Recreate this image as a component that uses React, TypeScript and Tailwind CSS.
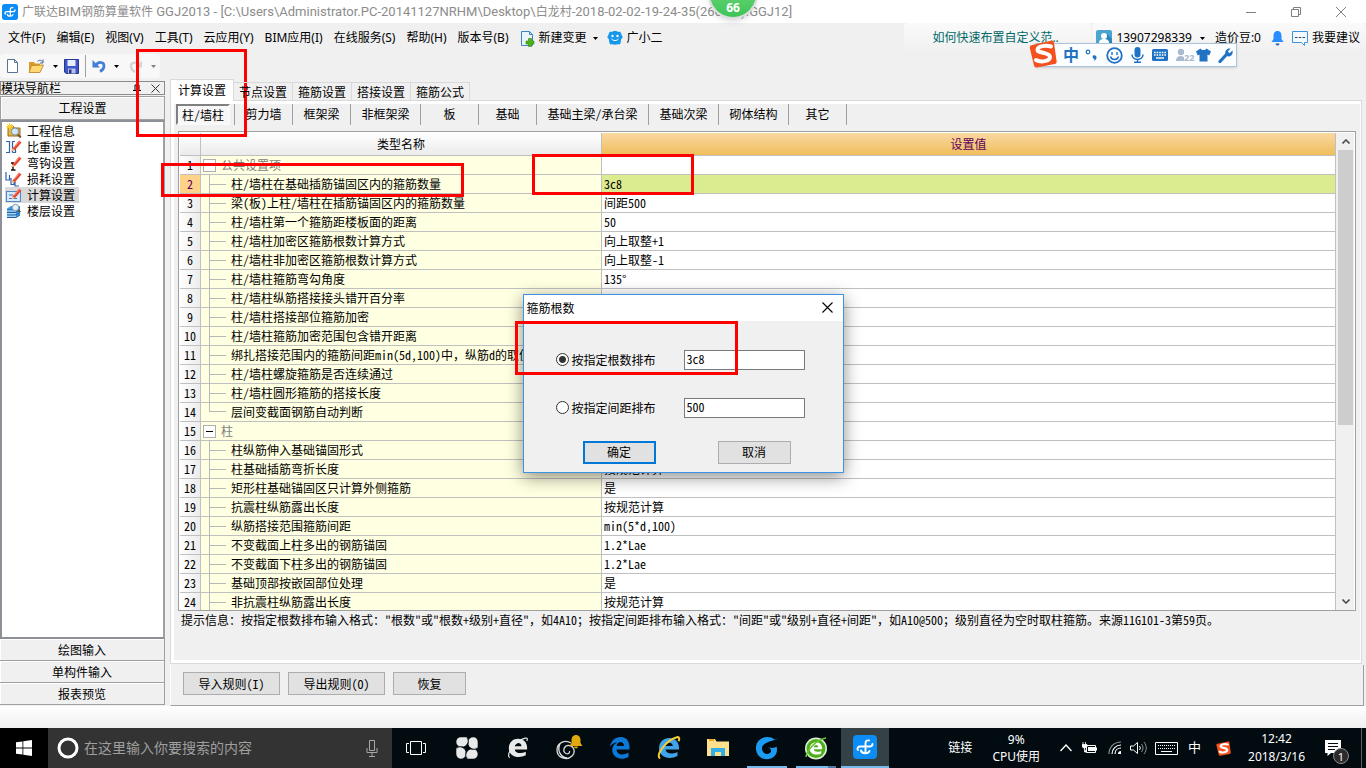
import type { ReactNode } from 'react';

type Row = { label: string; value?: string; group?: boolean; last?: boolean };

const rows: Row[] = [
  { label: '公共设置项', group: true },
  { label: '柱/墙柱在基础插筋锚固区内的箍筋数量', value: '3c8' },
  { label: '梁(板)上柱/墙柱在插筋锚固区内的箍筋数量', value: '间距500' },
  { label: '柱/墙柱第一个箍筋距楼板面的距离', value: '50' },
  { label: '柱/墙柱加密区箍筋根数计算方式', value: '向上取整+1' },
  { label: '柱/墙柱非加密区箍筋根数计算方式', value: '向上取整-1' },
  { label: '柱/墙柱箍筋弯勾角度', value: '135°' },
  { label: '柱/墙柱纵筋搭接接头错开百分率' },
  { label: '柱/墙柱搭接部位箍筋加密' },
  { label: '柱/墙柱箍筋加密范围包含错开距离' },
  { label: '绑扎搭接范围内的箍筋间距min(5d,100)中，纵筋d的取值' },
  { label: '柱/墙柱螺旋箍筋是否连续通过' },
  { label: '柱/墙柱圆形箍筋的搭接长度' },
  { label: '层间变截面钢筋自动判断', last: true },
  { label: '柱', group: true },
  { label: '柱纵筋伸入基础锚固形式' },
  { label: '柱基础插筋弯折长度', value: '按规范计算' },
  { label: '矩形柱基础锚固区只计算外侧箍筋', value: '是' },
  { label: '抗震柱纵筋露出长度', value: '按规范计算' },
  { label: '纵筋搭接范围箍筋间距', value: 'min(5*d,100)' },
  { label: '不变截面上柱多出的钢筋锚固', value: '1.2*Lae' },
  { label: '不变截面下柱多出的钢筋锚固', value: '1.2*Lae' },
  { label: '基础顶部按嵌固部位处理', value: '是' },
  { label: '非抗震柱纵筋露出长度', value: '按规范计算' },
];

const hint =
  '提示信息：按指定根数排布输入格式："根数"或"根数+级别+直径"，如4A10；按指定间距排布输入格式："间距"或"级别+直径+间距"，如A10@500；级别直径为空时取柱箍筋。来源11G101-3第59页。';

const menus = ['文件(F)', '编辑(E)', '视图(V)', '工具(T)', '云应用(Y)', 'BIM应用(I)', '在线服务(S)', '帮助(H)', '版本号(B)'];

const subTabs: [string, string][] = [
  ['剪力墙', 'w-[58px]'],
  ['框架梁', 'w-[58px]'],
  ['非框架梁', 'w-[70px]'],
  ['板', 'w-[58px]'],
  ['基础', 'w-[58px]'],
  ['基础主梁/承台梁', 'w-[112px]'],
  ['基础次梁', 'w-[70px]'],
  ['砌体结构', 'w-[70px]'],
  ['其它', 'w-[58px]'],
];

/** Half-width Latin text in which the Chinese comma stays full-width. */
function Mixed({ text }: { text: string }) {
  return (
    <>
      {text.split(/(，)/).map((part, i) =>
        part === '，' ? <span key={i} className="[font-feature-settings:normal]">，</span> : part,
      )}
    </>
  );
}

function Icon({ w = 16, h = 16, box, children }: { w?: number; h?: number; box?: string; children: ReactNode }) {
  return (
    <svg width={w} height={h} viewBox={box ?? `0 0 ${w} ${h}`} fill="none" className="shrink-0" aria-hidden="true">
      {children}
    </svg>
  );
}

function AppLogo({ size }: { size: number }) {
  return (
    <Icon w={size} h={size} box="0 0 24 24">
      <rect width="24" height="24" rx="4" fill="#0b8df5" />
      <path
        d="M5 15c-1.500-2 0-3.500 2.500-3.500h9c2 0 3-.5 3-2.500M16 5.500c-2.500-.5-3.500.5-3.500 3v9.500M8 15.500c.5 3.500 7.500 3.500 8.500.500"
        stroke="#fff"
        strokeWidth="1.900"
        strokeLinecap="round"
      />
    </Icon>
  );
}

function Caret({ color = '#000' }: { color?: string }) {
  return (
    <Icon w={5} h={3}>
      <path d="M0 0h5L2.500 3z" fill={color} />
    </Icon>
  );
}

function Pencil() {
  return (
    <>
      <path d="M6.500 9.500 13 1.500l2.500 2L9 11l-3.500 1.200z" fill="#e8462e" />
      <path d="m8 8.500 5.500-6.500" stroke="#ff9a80" />
      <path d="m5.500 12.200.9-2.700L9 11z" fill="#f3cf9a" />
    </>
  );
}

const navItems: { label: string; icon: ReactNode }[] = [
  {
    label: '工程信息',
    icon: (
      <>
        <path d="M2 3h5l1 2h6v8H2z" fill="#e6b443" stroke="#9a6a12" />
        <circle cx="9" cy="8.500" r="3.600" fill="#cfe8fb" stroke="#7d8fa3" />
        <path d="m11.800 11.500 3 3" stroke="#7a5a30" strokeWidth="2" />
        <path d="M3.500 0v7M0 3.500h7M1 1l5 5M6 1 1 6" stroke="#ffd21f" />
      </>
    ),
  },
  {
    label: '比重设置',
    icon: (
      <>
        <path d="M0 2.500h3.500v11H0M6 2.500h3M6.500 2.500v11M6.500 13.500h3V10" stroke="#2f62a8" strokeWidth="1.200" />
        <Pencil />
      </>
    ),
  },
  {
    label: '弯钩设置',
    icon: (
      <>
        <path d="M5 8h4M7 8v7M5 15h4.500" stroke="#111" strokeWidth="1.400" />
        <Pencil />
      </>
    ),
  },
  {
    label: '损耗设置',
    icon: (
      <>
        <path d="M0 1v8h3.500V4M5 7v6.500h3V9M9 10v5h4" stroke="#2f62a8" strokeWidth="1.200" />
        <Pencil />
      </>
    ),
  },
  {
    label: '计算设置',
    icon: (
      <>
        <rect x="0.500" y="4.500" width="14" height="10" fill="#d7e9fb" stroke="#4f86c6" />
        <path d="M3 8h4M3 11.500h8" stroke="#3d79c0" />
        <Pencil />
      </>
    ),
  },
  {
    label: '楼层设置',
    icon: (
      <>
        <path d="M1 5.500 5 3h9v9l-4 2.500H1z" fill="#3f9be0" />
        <path d="M1 7h9l4-2.500M1 9.500h9L14 7M1 12h9l4-2.500M1 14.500h9l4-2.500" stroke="#1c5fa0" />
        <path d="M1 8h9M1 10.700h9M1 13.200h9" stroke="#c9e8ff" />
        <circle cx="9.500" cy="4.500" r="3.200" fill="#e3f2fc" stroke="#8c97a3" />
        <path d="m12 7 2.500 2" stroke="#6b4a26" strokeWidth="1.600" />
      </>
    ),
  },
];

function TitleBar() {
  return (
    <header className="flex h-[23px] shrink-0 items-center bg-white pl-0.5 text-[#8c8c8c]">
      <AppLogo size={16} />
      <h1 className="ml-1 whitespace-nowrap text-[13px] leading-5 [font-family:Roboto,'Noto_Sans_CJK_SC',sans-serif]">
        <span className="text-xs">广联达</span>BIM<span className="text-xs">钢筋算量软件</span>
        {' GGJ2013 - [C:\\Users\\Administrator.PC-20141127NRHM\\Desktop\\'}
        <span className="text-xs">白龙村</span>-2018-02-02-19-24-35(2666<span className="text-xs">版</span>).GGJ12]
      </h1>
      <div className="ml-auto flex items-center pr-[3px]">
        <button aria-label="最小化" className="flex w-[45px] justify-center">
          <Icon w={10} h={10}><path d="M0 5.500h10" stroke="#808080" /></Icon>
        </button>
        <button aria-label="还原" className="flex w-[45px] justify-center">
          <Icon w={10} h={10}><path d="M.5 2.500h7v7h-7zM2.500 2.500v-2h7v7h-2" stroke="#808080" /></Icon>
        </button>
        <button aria-label="关闭" className="flex w-[45px] justify-center">
          <Icon w={10} h={10}><path d="m0 0 10 10M10 0 0 10" stroke="#808080" /></Icon>
        </button>
      </div>
    </header>
  );
}

function MenuBar() {
  return (
    <div className="flex h-[30px] shrink-0 items-center whitespace-nowrap text-xs">
      <nav className="flex items-center gap-[11px] pl-2">
        {menus.map((m) => (
          <button key={m}>{m}</button>
        ))}
        <button className="flex items-center gap-1">
          <Icon w={15} h={17}>
            <path d="M1.500 1.500h8l3 3v11h-11z" fill="#e9f4fd" stroke="#3f82c3" />
            <path d="M9.500 1.500v3h3" stroke="#3f82c3" />
            <path d="M8.500 8.500h3v2.500H14v3h-2.500v2.500h-3V14H6v-3h2.500z" fill="#4cb418" stroke="#2f8a0a" strokeWidth=".6" />
          </Icon>
          新建变更
          <span className="ml-0.5"><Caret /></span>
        </button>
        <button className="-ml-0.5 flex items-center gap-1">
          <Icon w={16} h={16}>
            <path d="M8 1c1.500 0 2.500.6 3.500 1 1.500-.5 2.500.3 2.500 1.500l1.500 3.200c.3 1-.4 1.800-1.200 2l-.8 4.300c-.2 1.600-1.500 1.500-2.500 1.200-2 .6-4 .6-6 0-1 .3-2.300.4-2.500-1.200l-.8-4.300C.9 8.500.2 7.700.5 6.700L2 3.500C2 2.300 3 1.500 4.500 2 5.500 1.600 6.500 1 8 1z" fill="#1597ea" />
            <circle cx="5.500" cy="6" r="1.200" fill="#fff" />
            <circle cx="10.500" cy="6" r="1.200" fill="#fff" />
            <path d="M4.500 9c1.800 2 5.200 2 7 0" stroke="#fff" />
          </Icon>
          广小二
        </button>
      </nav>
      <div className="ml-auto flex h-full items-center">
        <a href="#tip" className="mr-px flex h-full w-[187px] items-center rounded-t bg-linear-to-b from-[#fafafa] to-[#f0f0f0] pl-7 text-[#006868]">
          如何快速布置自定义范..
        </a>
        <div className="flex h-full items-center rounded-t bg-linear-to-b from-[#fafafa] to-[#f0f0f0] pl-1 pr-1.5">
          <Icon w={16} h={16}>
            <rect width="16" height="16" rx="2" fill="#4aa3d0" />
            <path d="m11 4 5 5v5a2 2 0 0 1-2 2H7l-4-4z" fill="#2f86b5" />
            <circle cx="8" cy="6" r="3" fill="#fff" />
            <path d="M3 13c0-3 2-4 5-4s5 1 5 4z" fill="#fff" />
          </Icon>
          <button className="ml-1 flex items-center gap-2">13907298339 <Caret /></button>
          <span className="ml-2.5">造价豆:0</span>
          <button aria-label="通知" className="ml-2.5">
            <Icon w={13} h={16}>
              <path d="M6.500 1C3.500 1 2.500 3.500 2.500 6v3L.5 12h12l-2-3V6c0-2.500-1-5-4-5z" fill="#2a8cff" />
              <path d="M4.500 13.500h4a2 2 0 0 1-4 0z" fill="#1d5fb0" />
            </Icon>
          </button>
          <button className="ml-2 flex items-center gap-1">
            <Icon w={16} h={16}>
              <path d="M.5 1.500h15v11h-3v3l-3-3h-9z" fill="#f4faff" stroke="#3f93dd" />
              <path d="M3 7.500h2.500M6.800 7.500h2.500M10.500 7.500H13" stroke="#2c4a70" />
            </Icon>
            我要建议
          </button>
        </div>
      </div>
    </div>
  );
}

function Toolbar() {
  return (
    <div className="flex h-[26px] shrink-0 items-center">
      <div className="flex h-6 items-center rounded bg-[#f8f8f8] pl-1 pr-1">
        <button aria-label="新建" className="flex w-4 justify-center">
          <Icon w={11} h={14}>
            <path d="M.5.500h7l3 3v10H.5z" fill="#fff" stroke="#5a7394" />
            <path d="M7.500.500v3h3" stroke="#5a7394" />
          </Icon>
        </button>
        <button aria-label="打开" className="ml-2 flex items-center gap-2">
          <Icon w={17} h={15}>
            <path d="M1 3h5l1 1.500h5V13H1z" fill="#d99c2b" />
            <path d="m3.500 6.500 12-.5L12 13.500H1z" fill="#ffd773" stroke="#b9801c" strokeWidth=".8" />
            <path d="M9.500 2.500c2-2 4-1.500 5 .5M15 .5V4h-3" stroke="#44669a" />
          </Icon>
          <Caret />
        </button>
        <button aria-label="保存" className="ml-1.5">
          <Icon w={15} h={15}>
            <path d="M.5.500h14v14H2l-1.500-1.500z" fill="#3d56c8" stroke="#27378f" />
            <path d="M3.500 1h8v6h-8z" fill="#e9eefc" />
            <path d="M4 9.500h7.500v5H4z" fill="#b7c2e6" />
            <path d="M5 10.500h2.500v4H5z" fill="#27378f" />
          </Icon>
        </button>
        <span className="ml-1.5 h-[22px] w-px bg-[#a0a0a0]" />
        <button aria-label="撤销" className="ml-1.5 flex items-center gap-2">
          <Icon w={14} h={14}>
            <path d="M4 6.500C6 2 12.500 2.500 12 7.500c-.2 2.500-2 4-4 5" stroke="#3f7fd6" strokeWidth="2.600" />
            <path d="M.5 1v7.500H8z" fill="#3f7fd6" />
          </Icon>
          <Caret />
        </button>
        <button aria-label="重做" className="ml-2.5 flex items-center gap-2">
          <Icon w={14} h={14}>
            <path d="M10 6.500C8 2.500 1.500 2.500 2 7.500c.2 2.500 2 4.500 4 5.500" stroke="#d4d4d4" strokeWidth="2.400" />
            <path d="M13 1.500v7H6.500z" fill="#d4d4d4" />
          </Icon>
          <Caret color="#808080" />
        </button>
      </div>
    </div>
  );
}

function Sidebar() {
  const section = 'h-[22px] shrink-0 border-b border-r border-[#a0a0a0] bg-[#f0f0f0] shadow-[inset_1px_1px_0_#fff]';
  return (
    <aside className="flex w-[165px] shrink-0 flex-col pb-px pt-0.5">
      <div className="flex h-3.5 shrink-0 items-center border border-[#8c8c8c] pr-1">
        <span className="leading-3">模块导航栏</span>
        <button aria-label="固定" className="ml-auto">
          <Icon w={8} h={9}><path d="M2 1h4v5M2 1v5M0 6.500h8M4 7v2M5.500 1v5" stroke="#000" /></Icon>
        </button>
        <button aria-label="关闭导航栏" className="ml-2.5">
          <Icon w={9} h={9}><path d="m.5.500 8 8M8.500.500l-8 8" stroke="#333" /></Icon>
        </button>
      </div>
      <button className="mt-px h-6 shrink-0 border border-[#a0a0a0] bg-[#f0f0f0] shadow-[inset_1px_1px_0_#fff]">工程设置</button>
      <ul className="min-h-0 flex-1 border-2 border-[#8d9096] border-r-[#a0a0a0] bg-white pl-[3px] pt-px">
        {navItems.map((n) => (
          <li key={n.label}>
            <button className={`flex h-4 items-center gap-1 ${n.label === '计算设置' ? 'bg-[#d9d9d9]' : ''}`}>
              <Icon w={18} h={16} box="-1 0 18 16">{n.icon}</Icon>
              <span className="pr-1 leading-4">{n.label}</span>
            </button>
          </li>
        ))}
      </ul>
      <button className={section}>绘图输入</button>
      <button className={section}>单构件输入</button>
      <button className={section}>报表预览</button>
    </aside>
  );
}

function SettingsTable() {
  return (
    <div className="mx-1 mt-1.5 flex min-h-0 flex-1 overflow-hidden border border-[#a0a0a0] bg-white p-px pb-0">
      <div className="min-w-0 flex-1 overflow-hidden">
        <table className="w-full table-fixed border-separate border-spacing-0">
          <colgroup>
            <col className="w-[21px]" />
            <col className="w-[401px]" />
            <col />
          </colgroup>
          <thead>
            <tr className="h-[23px]">
              <th className="border-b border-r border-[#c0c0c0] bg-linear-to-b from-white to-[#ebebeb] p-0" />
              <th className="border-b border-r border-[#c0c0c0] bg-linear-to-b from-white to-[#ebebeb] p-0 font-normal leading-[18px]">类型名称</th>
              <th className="border-b border-r border-[#c0c0c0] bg-linear-to-b from-[#fad8a0] to-[#efbd58] p-0 font-normal leading-[18px] text-[#60005c]">设置值</th>
            </tr>
          </thead>
          <tbody>
            {rows.map((r, i) => {
              const selected = i === 1;
              return (
                <tr key={r.label} className="h-[19px]">
                  <td className={`border-b border-r border-[#c0c0c0] p-0 text-center leading-[18px] ${selected ? 'bg-[#ffd28a] text-[#60005c]' : 'bg-linear-to-r from-white to-[#ececec]'}`}>{i + 1}</td>
                  <td className="border-b border-r border-[#c0c0c0] bg-[#ffffe1] p-0">
                    {r.group ? (
                      <div className="flex h-[18px] items-center gap-[5px] pl-0.5 text-[#808080]">
                        <span className="flex size-[13px] items-center justify-center border border-[#b0b0b0] bg-white">
                          {i > 0 && <span className="h-px w-[7px] bg-black" />}
                        </span>
                        {r.label}
                      </div>
                    ) : (
                      <div className="flex h-[18px] items-center pl-2">
                        <span className={`flex w-[17px] items-center border-l border-[#b8b8b8] ${r.last ? 'h-[9px] self-start border-b' : '-my-px h-[19px]'}`}>
                          {!r.last && <span className="h-px w-full bg-[#b8b8b8]" />}
                        </span>
                        <span className="whitespace-nowrap pl-[5px]"><Mixed text={r.label} /></span>
                      </div>
                    )}
                  </td>
                  <td className={`border-b border-r border-[#c0c0c0] p-0 pl-0.5 leading-[18px] ${selected ? 'bg-[#dbeb8f]' : 'bg-white'}`}>{r.value}</td>
                </tr>
              );
            })}
          </tbody>
        </table>
      </div>
      <div className="flex w-[18px] shrink-0 flex-col items-center bg-[#f0f0f0] pl-px">
        <button aria-label="向上滚动" className="flex h-[17px] items-center">
          <Icon w={8} h={5}><path d="m.5 4.500 3.500-3.500 3.500 3.500" stroke="#505050" strokeWidth="1.600" /></Icon>
        </button>
        <div className="flex w-[15px] flex-1 flex-col">
          <div className="h-[62%] bg-[#cdcdcd]" />
        </div>
        <button aria-label="向下滚动" className="flex h-[17px] items-center">
          <Icon w={8} h={5}><path d="m.5.500 3.500 3.500 3.500-3.500" stroke="#505050" strokeWidth="1.600" /></Icon>
        </button>
      </div>
    </div>
  );
}

function MainPanel() {
  const button = 'h-[23px] border border-[#adadad] bg-[#e1e1e1]';
  return (
    <main className="ml-[5px] flex min-w-0 flex-1 flex-col">
      <div role="tablist" className="z-1 flex h-[21px] shrink-0 items-end">
        <button role="tab" aria-selected="true" className="-mb-px h-[22px] w-16 border border-b-0 border-[#d9d9d9] bg-white pb-0.5">计算设置</button>
        {['节点设置', '箍筋设置', '搭接设置', '箍筋公式'].map((t) => (
          <button key={t} role="tab" aria-selected="false" className="h-[18px] w-[59px] border border-b-0 border-l-0 border-[#d9d9d9]">{t}</button>
        ))}
      </div>
      <section className="mr-1 flex min-h-0 flex-1 flex-col border border-[#d9d9d9] bg-white p-[3px] pr-px">
        <div className="flex min-h-0 flex-1 flex-col bg-[#f0f0f0]">
          <div className="flex h-[21px] shrink-0 pl-0.5">
            <button className="h-[21px] w-[54px] border-2 border-[#808080] border-b-[#fafafa] border-r-[#fafafa] bg-[repeating-conic-gradient(#f0f0f0_0_25%,#fff_0_50%)] bg-size-[2px_2px]">柱/墙柱</button>
            <span className="ml-1 w-px bg-[#a0a0a0]" />
            {subTabs.map(([label, width]) => (
              <button key={label} className={`border-r border-[#a0a0a0] pb-0.5 ${width}`}>{label}</button>
            ))}
          </div>
          <SettingsTable />
          <p className="h-[49px] shrink-0 overflow-hidden whitespace-nowrap pl-[7px] leading-[18px]">
            <Mixed text={hint} />
          </p>
        </div>
      </section>
      <div className="mr-0.5 mt-px flex h-[41px] shrink-0 gap-2 border-b border-l border-r border-[#a0a0a0] border-l-white pl-3 pt-[7px]">
        <button className={`${button} w-[97px]`}>导入规则(I)</button>
        <button className={`${button} w-[97px]`}>导出规则(O)</button>
        <button className={`${button} w-[73px]`}>恢复</button>
      </div>
    </main>
  );
}

function Dialog() {
  const radio = 'size-[13px] shrink-0 appearance-none rounded-full border border-[#333] bg-white checked:bg-[radial-gradient(#333_0_3px,#fff_4px)]';
  const field = 'h-5 w-[121px] border border-[#7a7a7a] bg-white px-0.5 pb-0.5';
  return (
    <div className="absolute inset-0 z-10 grid place-items-center pb-0.5">
      <div role="dialog" aria-label="箍筋根数" className="relative flex h-[179px] w-[321px] flex-col border border-[#3c93e6] bg-[#f0f0f0] shadow-[0_4px_16px_rgba(0,0,0,0.45)]">
        <div className="flex h-[26px] shrink-0 items-center bg-white pl-[3px] pr-2.5 text-xs">
          箍筋根数
          <button aria-label="关闭对话框" className="ml-auto">
            <Icon w={11} h={11}><path d="m.5.500 10 10M10.500.500l-10 10" stroke="#000" strokeWidth="1.100" /></Icon>
          </button>
        </div>
        <form className="flex flex-col pl-8 pt-[29px]">
          <div className="flex">
            <label className="flex w-32 items-center gap-[3px]">
              <input type="radio" name="mode" defaultChecked className={radio} />按指定根数排布
            </label>
            <input aria-label="根数" defaultValue="3c8" className={field} />
          </div>
          <div className="mt-7 flex">
            <label className="flex w-32 items-center gap-[3px]">
              <input type="radio" name="mode" className={radio} />按指定间距排布
            </label>
            <input aria-label="间距" defaultValue="500" className={field} />
          </div>
          <div className="mt-[23px] flex gap-[62px] pl-[27px]">
            <button type="button" className="h-[23px] w-[73px] border-2 border-[#0078d7] bg-[#e1e1e1]">确定</button>
            <button type="button" className="h-[23px] w-[73px] border border-[#adadad] bg-[#e1e1e1]">取消</button>
          </div>
        </form>
        <div className="pointer-events-none absolute -left-[9px] top-[26px] h-[54px] w-[223px] border-3 border-[#f00]" />
      </div>
    </div>
  );
}

function SogouMark({ size }: { size: number }) {
  return (
    <Icon w={size} h={size} box="0 0 28 28">
      <path d="M3 5 22 .8a2.500 2.500 0 0 1 3 1.900l2.600 18.500a2.500 2.500 0 0 1-2 2.900L8 27.500a2.500 2.500 0 0 1-3-1.900L.8 8a2.500 2.500 0 0 1 2.200-3z" fill="#f4511e" />
      <path d="M22 6.500c-5-1.500-13-.5-13.500 3C8 13.500 21 12 21 17c0 4.500-9.500 5.500-14 3" stroke="#fff" strokeWidth="4" strokeLinecap="round" />
    </Icon>
  );
}

function ImeBar() {
  return (
    <div className="absolute right-[129px] top-[43px] z-10 flex h-6 w-[202px] items-center border border-l-0 border-[#a9c4dc] bg-[#fbfdff] text-[#1f72c4] shadow-sm">
      <span className="absolute -left-1.5 -top-1"><SogouMark size={28} /></span>
      <span className="ml-7 text-base font-bold leading-5">中</span>
      <span className="ml-1.5 flex">
        <Icon w={13} h={16}>
          <circle cx="3" cy="5" r="1.800" stroke="#1f72c4" strokeWidth="1.200" />
          <path d="M8 8.500c2-.8 4 .5 3.500 2.500-.3 1.500-1.500 2.500-3 3 .8-.8 1.200-1.500 1-2-1.500 0-2.500-2-1.500-3.500z" fill="#1f72c4" />
        </Icon>
      </span>
      <span className="ml-2">
        <Icon w={17} h={17}>
          <circle cx="8.500" cy="8.500" r="7.300" stroke="#1f72c4" strokeWidth="1.800" />
          <path d="M6 5v3M11 5v3M4.500 9.500c1 4 7 4 8 0" stroke="#1f72c4" strokeWidth="1.400" />
        </Icon>
      </span>
      <span className="ml-2">
        <Icon w={13} h={16}>
          <rect x="3.500" y="0" width="6" height="10.500" rx="3" fill="#1f72c4" />
          <path d="M1 7.500c0 6.500 11 6.500 11 0M6.500 12v3M3 15.300h7" stroke="#1f72c4" strokeWidth="1.500" />
        </Icon>
      </span>
      <span className="ml-2">
        <Icon w={16} h={12}>
          <rect width="16" height="12" rx="1.500" fill="#1f72c4" />
          <path d="M2 3.500h12M2 6h12" stroke="#fff" strokeWidth="1.400" strokeDasharray="1.600 1" />
          <path d="M4 9h8" stroke="#fff" strokeWidth="1.400" />
        </Icon>
      </span>
      <span className="ml-2 flex items-end text-[#aab9d0]">
        <Icon w={8} h={15}>
          <circle cx="5" cy="4" r="3.200" fill="#aab9d0" />
          <path d="M0 13c0-3.500 2-5 5-5l3 1v4z" fill="#aab9d0" />
        </Icon>
        <span className="text-[9px] font-bold leading-[10px]">22</span>
      </span>
      <span className="ml-0.5">
        <Icon w={15} h={14}>
          <path d="M4.500.500c1.500 2 4.500 2 6 0L15 3.500l-1.800 4-1.700-1v7h-8v-7l-1.700 1L0 3.500z" fill="#1f72c4" />
        </Icon>
      </span>
      <span className="ml-[7px]">
        <Icon w={15} h={15}>
          <path d="M2 13.500 8 7" stroke="#1f72c4" strokeWidth="3.200" strokeLinecap="round" />
          <path d="M12.500.700 9.800 3.500l1.800 1.800 2.800-2.700c1.300 3.400-2 6.800-5.500 5.500C5.500 6.500 7.500-.5 12.500.700z" fill="#1f72c4" />
        </Icon>
      </span>
    </div>
  );
}

function TaskButton({ label, className = '', children }: { label: string; className?: string; children: ReactNode }) {
  return (
    <button aria-label={label} className={`flex h-10 w-12 shrink-0 items-center justify-center ${className}`}>
      {children}
    </button>
  );
}

const eShape = 'M2 12.500C2 5.500 7 2 12 2c6.500 0 10.500 4.500 10 11.500H8.500c.5 4.500 7 5 12 2.500v4c-9 4.500-18.500.500-18.500-7.500zM8.500 10h7.300c-.2-4.500-6.800-4.500-7.300 0z';

function Taskbar() {
  return (
    <footer className="flex h-10 shrink-0 items-center bg-[#020b0f] text-xs text-white">
      <button aria-label="开始" className="flex h-10 w-12 shrink-0 items-center justify-center bg-black">
        <Icon w={16} h={16}>
          <path d="M0 2.300 6.500 1.400v6.200H0zM7.300 1.300 16 0v7.600H7.300zM0 8.400h6.500v6.200L0 13.700zM7.300 8.400H16V16l-8.700-1.200z" fill="#fff" />
        </Icon>
      </button>
      <label className="flex h-10 w-[344px] shrink-0 items-center bg-[#333] pl-[9px] pr-3.5">
        <Icon w={22} h={22}><circle cx="11" cy="11" r="9" stroke="#fff" strokeWidth="3" /></Icon>
        <input aria-label="搜索" placeholder="在这里输入你要搜索的内容" className="ml-[5px] min-w-0 flex-1 bg-transparent text-sm placeholder:text-[#9f9f9f]" />
        <Icon w={12} h={17}>
          <path d="M3.500.500h5v10h-5zM1 8v4.500h10V8M6 12.500V16M3 16.500h6" stroke="#a8a8a8" />
        </Icon>
      </label>
      <div className="flex gap-[3px]">
        <TaskButton label="任务视图">
          <Icon w={20} h={14}><path d="M4.500.500h11v13h-11zM3 2.500H.5v9H3M17 2.500h2.500v9H17" stroke="#fff" /></Icon>
        </TaskButton>
        <TaskButton label="风车">
          <Icon w={22} h={22}>
            <path d="M5 .3h4.500C12 .3 13 2.500 12 5c-.8 2.300-2 4.500-4 4.500H4.500C2 9.500.3 7.500.3 4.800S2.300.3 5 .3z" fill="#e8eaea" />
            <path d="M21.700 5v4.500c0 2.500-2.200 3.500-4.700 2.500-2.300-.8-4.500-2-4.500-4V4.500c0-2.500 2-4.200 4.700-4.200s4.500 2 4.500 4.700z" fill="#e8eaea" />
            <path d="M17 21.700h-4.500c-2.500 0-3.500-2.200-2.500-4.700.8-2.300 2-4.500 4-4.500h3.500c2.500 0 4.200 2 4.200 4.700s-2 4.500-4.700 4.500z" fill="#e8eaea" />
            <path d="M.3 17v-4.500c0-2.500 2.200-3.500 4.700-2.500 2.300.8 4.500 2 4.500 4v3.500c0 2.500-2 4.200-4.700 4.200S.3 19.700.3 17z" fill="#e8eaea" />
            <path d="M1 11c3-2.500 7-1 9 3M11 1c2.500 3 1 7-3 9M21 11c-3 2.500-7 1-9-3M11 21c-2.500-3-1-7 3-9" stroke="#020b0f" strokeWidth=".9" />
          </Icon>
        </TaskButton>
        <TaskButton label="浏览器">
          <Icon w={22} h={24} box="0 0 24 24">
            <path d={eShape} fill="#e8eaea" />
            <path d="M3 22.500C-1.500 19 9 4 20 1.200c2.500-.5 2.500 1.300 1.500 3" stroke="#e8eaea" strokeWidth="1.300" />
          </Icon>
        </TaskButton>
        <TaskButton label="消息">
          <Icon w={28} h={26}>
            <path d="M16 8c-6-4-14 0-14 7 0 8 10 11 15 6 4-4 2-10-3-10.500-5-.5-7 6-3 8 2.500 1 4-1 3.500-2.500M5 9c-3 6 0 13 7 14" stroke="#d8dcdc" strokeWidth="1.300" />
            <path d="M21 0c3 0 4.500 2.500 4.500 5v3l2 3H14.500l2-3V5c0-2.500 1.500-5 4.500-5z" fill="#e2a90f" />
            <path d="M19 11.500h4a2 2 0 0 1-4 0z" fill="#e2a90f" />
          </Icon>
        </TaskButton>
        <TaskButton label="Edge">
          <Icon w={22} h={22}>
            <path d="M1 10C2 3.500 6.500 0 11.500 0 17.500 0 21 4.500 20.500 12.500H7.500c.5 6 7.500 6 12 3v4.500C11 24.500 2.500 20 3.300 12c.4-3.500 2.700-5.500 5-6.500C4.500 5.500 2.500 7.500 1 10zM7.500 9H15c0-5-6.500-5.500-7.500 0z" fill="#0c78d8" />
          </Icon>
        </TaskButton>
      </div>
      <div className="ml-px flex gap-px">
        <TaskButton label="Internet Explorer">
          <Icon w={24} h={24}>
            <path d={eShape} fill="#3fa4ec" />
            <path d="M3 22.500C-1.500 19 9 4 20 1.200c2.500-.5 2.800 1.800 1.500 4" stroke="#f6cf2e" strokeWidth="2" />
          </Icon>
        </TaskButton>
        <TaskButton label="文件资源管理器">
          <Icon w={22} h={20}>
            <path d="M0 1h8l1.500 2.500H22V18H0z" fill="#ffe08c" />
            <path d="M2 1h5v2H2z" fill="#e8a91e" />
            <path d="M4 18v-8h14v8h-4v-4H8v4z" fill="#32b0e6" />
          </Icon>
        </TaskButton>
        <TaskButton label="广联达" className="bg-[linear-gradient(#76b9ed,#76b9ed)] bg-size-[40px_2px] bg-bottom bg-no-repeat">
          <Icon w={24} h={24}>
            <path d="M23.500 2.500c-2 0-3 1-4 1C14-1.500 2 1 1 11c-.8 9 8 14.500 15 11.500 5-2 7-7 5.500-12-1 1.500-5 2-8.500.5 2.500 1 4 3.500 2.500 5.500-2.500 3-9 1-8.500-4.500C8 6 16 5.500 23.500 2.500z" fill="#1b9cf2" />
          </Icon>
        </TaskButton>
        <TaskButton label="绿色浏览器" className="bg-[linear-gradient(90deg,#76b9ed_32px,#4d7ba3_32px)] bg-size-[40px_2px] bg-bottom bg-no-repeat">
          <Icon w={24} h={24}>
            <circle cx="12" cy="12.500" r="11" fill="#e5f3da" />
            <circle cx="12" cy="12.500" r="9.500" fill="#4fae1e" />
            <g transform="translate(4.500 5) scale(.62)"><path d={eShape} fill="#fff" /></g>
            <path d="M2 21C3 13 14 3 22 2" stroke="#69c533" strokeWidth="1.500" />
          </Icon>
        </TaskButton>
        <TaskButton label="钢筋算量" className="border-b-2 border-[#76b9ed] bg-[#344145]"><AppLogo size={24} /></TaskButton>
      </div>
      <div className="ml-auto flex h-10 shrink-0 items-center">
        <span>链接</span>
        <div className="ml-5 text-center leading-[17px]">
          <p>9%</p>
          <p>CPU使用</p>
        </div>
        <button aria-label="显示隐藏的图标" className="ml-5">
          <Icon w={12} h={8}><path d="m.5 7 5.500-6 5.500 6" stroke="#fff" strokeWidth="1.300" /></Icon>
        </button>
        <span className="ml-2.5">
          <Icon w={16} h={12}>
            <path d="M4.500 3.500h9v7h-9zM14.500 5.500v3" stroke="#fff" />
            <path d="M6 5h7v4H6z" fill="#fff" />
            <path d="M1 0v2.500M3.500 0v2.500M0 2.500h5v2L3.500 6H1.500L0 4.500zM2.500 6v4h2" stroke="#fff" fill="#fff" strokeWidth=".8" />
          </Icon>
        </span>
        <span className="ml-2.5">
          <Icon w={14} h={14}>
            <path d="M1 13C1 6 6 1 13 1" stroke="#8b9194" strokeWidth="1.200" />
            <path d="M4 13c0-5 4-9 9-9M7 13c0-3.500 2.500-6 6-6" stroke="#fff" strokeWidth="1.200" />
            <path d="M10 13c0-2 1-3 3-3v3z" fill="#fff" />
          </Icon>
        </span>
        <span className="ml-2">
          <Icon w={17} h={14}>
            <path d="M.5 5h3l4-3.500v11L3.500 9h-3zM9.500 5c1 1.500 1 2.500 0 4" stroke="#fff" />
            <path d="M11.500 3c2 2.500 2 5.500 0 8M14 1c3 4 3 8 0 12" stroke="#8b9194" />
          </Icon>
        </span>
        <span className="ml-2">
          <Icon w={23} h={13}>
            <path d="M.5.500h22v12H.5z" stroke="#fff" />
            <path d="M3 3.500h17M3 6.500h17" stroke="#fff" strokeDasharray="1 1" />
            <path d="M6 9.500h11" stroke="#fff" />
          </Icon>
        </span>
        <span className="ml-2.5 text-[13px]">中</span>
        <span className="ml-[15px]"><SogouMark size={15} /></span>
        <time className="ml-[17px] text-center leading-[18px]">
          <p>12:42</p>
          <p>2018/3/16</p>
        </time>
        <button aria-label="通知中心" className="relative ml-5 mr-3 h-6 w-6">
          <Icon w={17} h={17}>
            <path d="M0 0h16v13H6l-3.500 3v-3H0z" fill="#fff" />
            <path d="M3 3.500h10M3 6.500h10M3 9.500h7" stroke="#020b0f" />
          </Icon>
          <span className="absolute -bottom-1 right-0 flex size-4 items-center justify-center rounded-full border border-[#8a8a8a] bg-[#2b2b2b] text-[11px] leading-none">1</span>
        </button>
        <span className="mr-1 h-10 w-px bg-[#5a6265]" />
      </div>
    </footer>
  );
}

export default function App() {
  return (
    <div className="relative flex h-screen min-h-[600px] flex-col overflow-hidden bg-[#f0f0f0] text-black [font-family:'Noto_Sans','Noto_Sans_CJK_SC',sans-serif]">
      <TitleBar />
      <MenuBar />
      <Toolbar />
      <div className="flex min-h-0 flex-1 text-xs [font-family:'Noto_Sans_CJK_SC',sans-serif] [font-feature-settings:'hwid']">
        <Sidebar />
        <MainPanel />
      </div>
      <div className="h-[22px] shrink-0 bg-linear-to-b from-white to-[#f0f0f0]" />
      <Taskbar />

      <div className="text-xs [font-family:'Noto_Sans_CJK_SC',sans-serif] [font-feature-settings:'hwid']">
        <Dialog />
      </div>
      <ImeBar />
      <div className="absolute -top-[31px] left-[708px] z-10 flex size-[50px] items-end justify-center rounded-full border-2 border-[#dcdcdc] bg-linear-to-b from-[#7be08a] to-[#3cc456] pb-px text-xs font-bold leading-4 text-white shadow-md">66</div>
      <div className="pointer-events-none absolute left-[136px] top-[49px] h-[88px] w-[111px] border-3 border-[#f00]" />
      <div className="pointer-events-none absolute left-[161px] top-[163px] h-[34px] w-[303px] border-3 border-[#f00]" />
      <div className="pointer-events-none absolute left-[532px] top-[154px] h-[41px] w-[162px] border-3 border-[#f00]" />
    </div>
  );
}
